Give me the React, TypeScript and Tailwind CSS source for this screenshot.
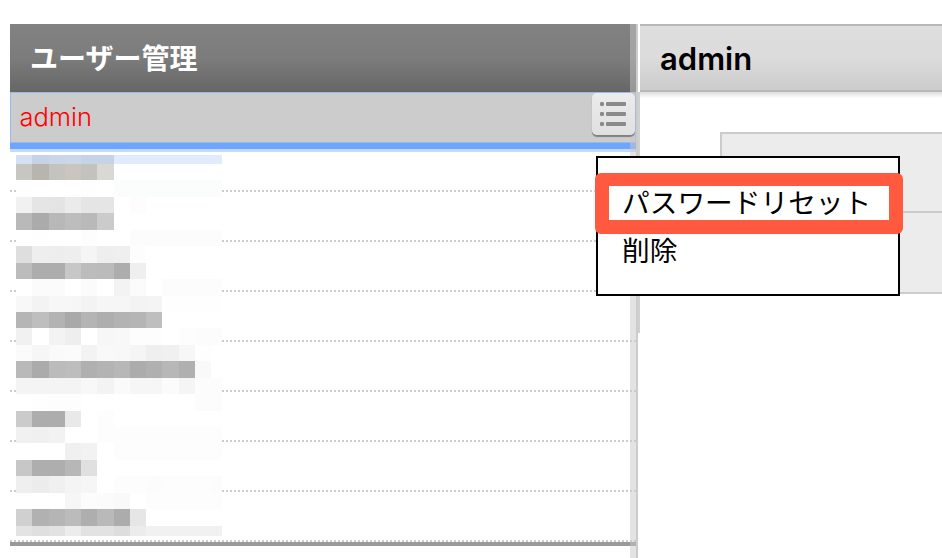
import React from "react";

// blurred user names, one line per strip of blocks
const mosaic = [
  "d5e0f2 c6d2e6 cad5e8 cbd6e9 c6d2e6 c7d2e6 e0ebfb e0ebfb e0ebfb e0ebfb e0ebfb e0ebfb e0ebfb",
  "c8c6c0 b8b4ae c5c3bd c9c5bf c3c2bd d9d8d3 fff fff fff fff fff fff fff",
  "fefefe fff fff fff fefefe fff fbfcfc fbfcfc fbfcfc fbfcfc fbfcfc fbfcfc fbfcfc",
  "f1f1f1 e5e5e5 e4e4e4 ebebeb e5e5e5 e5e5e5 fff fdfdfd fff fff fff fff fff",
  "b9b9b9 ababab b8b8b8 bdbdbd b9b9b9 cbcbcb fff fff fff fff fff fff fff",
  "fff fefefe fff fff fdfdfd fff fff fcfcfc fcfcfc fcfcfc fcfcfc fcfcfc fcfcfc",
  "dedede eeeeee ededed eeeeee f5f5f5 eeeeee efefef fdfdfd fff fff fff fff fff",
  "bcbcbc adadad adadad c7c7c7 bcbcbc bbbbbb adadad efefef fff fff fff fff fff",
  "fff fbfbfb fbfbfb fff fbfbfb fff f3f3f3 fbfbfb fff fcfcfc fcfcfc fcfcfc fcfcfc",
  "f8f8f8 f3f3f3 f7f7f7 f6f6f6 f3f3f3 f6f6f6 f6f6f6 f3f3f3 f4f4f4 fefefe fefefe fefefe fefefe",
  "b5b5b5 bebebe b3b3b3 a9a9a9 b4b4b4 aeaeae b3b3b3 b5b5b5 bebebe fff fff fff fff",
  "f1f1f1 fff f3f3f3 eeeeee fff f7f7f7 f8f8f8 fdfdfd fdfdfd fff fdfdfd fcfcfc fcfcfc",
  "fbfbfb f6f6f6 fafafa fbfbfb f3f3f3 f9f9f9 f8f8f8 f5f5f5 efefef f0f0f0 f7f7f7 fefefe fff",
  "b9b9b9 ababab bbbbbb bdbdbd b0b0b0 b3b3b3 b7b7b7 acacac b0b0b0 b7b7b7 b0b0b0 f9f9f9 fff",
  "f4f4f4 f4f4f4 f4f4f4 f4f4f4 f8f8f8 f3f3f3 fafafa f6f6f6 f6f6f6 fbfbfb f5f5f5 fcfcfc fcfcfc",
  "fff fefefe fdfdfd fdfdfd fff fff fff fff fff fff fff fcfcfc fcfcfc",
  "cbcbcb adadad adadad e9e9e9 fff fdfdfd fff fff fff fff fff fff fff",
  "f1f1f1 f0f0f0 f2f2f2 fff fff fdfdfd fdfdfd fdfdfd fdfdfd fdfdfd fdfdfd fdfdfd fdfdfd",
  "fff fff fff f0f0f0 f2f2f2 fff fdfdfd fdfdfd fdfdfd fdfdfd fdfdfd fdfdfd fdfdfd",
  "c7c7c7 aeaeae aeaeae b7b7b7 e0e0e0 fff fff fff fff fff fff fff fff",
  "efefef ececec f0f0f0 f4f4f4 f6f6f6 fff fdfdfd fdfdfd fcfcfc fdfdfd fdfdfd fdfdfd fcfcfc",
  "fff fff fff f6f6f6 fcfcfc fbfbfb f9f9f9 fff fdfdfd fdfdfd fdfdfd fdfdfd fdfdfd",
  "d0d0d0 b1b1b1 b5b5b5 bbbbbb aeaeae b9b9b9 acacac e6e6e6 fff fff fff fff fff",
  "e3e3e3 dfdfdf e2e2e2 ececec e2e2e2 e2e2e2 dddddd ececec f1f1f1 f1f1f1 f1f1f1 f1f1f1 f1f1f1",
];

function Mosaic() {
  return (
    <div className="absolute left-[6px] top-[3px] flex flex-col">
      {mosaic.map((line, i) => (
        <div
          key={i}
          className={`grid grid-cols-[repeat(12,16.25px)_11px] ${
            i === 0 ? "h-[9px]" : i === mosaic.length - 1 ? "h-[10px]" : "h-[16.45px]"
          }`}
        >
          {line.split(" ").map((c, j) => (
            <div key={j} style={{ backgroundColor: `#${c}` }} />
          ))}
        </div>
      ))}
    </div>
  );
}

function ListIcon() {
  return (
    <svg width="43" height="42" viewBox="0 0 43 42" fill="#8a8a8a">
      <rect x="8" y="9" width="4" height="4" rx="1.2" />
      <rect x="14" y="9" width="20" height="4" rx="1" />
      <rect x="8" y="19" width="4" height="4" rx="1.2" />
      <rect x="14" y="19" width="20" height="4" rx="1" />
      <rect x="8" y="29" width="4" height="4" rx="1.2" />
      <rect x="14" y="29" width="20" height="4" rx="1" />
    </svg>
  );
}

export default function App() {
  const rowHeights = ["h-[40px]", "h-[50px]", "h-[50px]", "h-[50px]", "h-[50px]", "h-[50px]", "h-[50px]", "h-[50px]"];

  return (
    <div className="relative flex h-[558px] w-[942px] overflow-hidden bg-white pl-[10px] pt-[24px] font-['Noto_Sans_CJK_JP',sans-serif]">
      {/* user list */}
      <div className="relative flex w-[626px] shrink-0 flex-col">
        <div className="flex h-[68px] items-center bg-gradient-to-b from-[#828282] via-[#7c7c7c] to-[#666666] pb-[2px] pl-[20px] text-[28px] font-bold leading-none text-white">
          ユーザー管理
        </div>
        <div className="flex h-[51px] items-center border border-[#9ab8e8] bg-[#cccccc] pl-[8.5px] font-['Inter',sans-serif] text-[25.5px] font-light text-[#ff0000]">
          admin
        </div>
        <div className="h-[6px] bg-[#6ea6ff]" />
        <div className="h-[3px] bg-[#c4daf8]" />
        <div className="relative flex flex-col">
          {rowHeights.map((h, i) => (
            <div key={i} className={`${h} border-b-2 border-dotted border-[#cccccc]`} />
          ))}
          <Mosaic />
        </div>
        <div className="h-[4px] bg-[#999999]" />

        <div className="absolute bottom-0 right-0 top-0 w-[6px] bg-[#c8c8c8]/50" />
        <div className="absolute left-[582px] top-[69px] flex h-[42px] w-[43px] items-center justify-center rounded-[5px] bg-gradient-to-b from-[#ececec] to-[#e0e0e0] shadow-[0_2px_1px_#808080]">
          <ListIcon />
        </div>
      </div>

      <div className="w-[2px] shrink-0 bg-[#cccccc]" />
      <div className="flex w-[2px] shrink-0 flex-col">
        <div className="h-[68px]" />
        <div className="h-[241px] bg-[#d0d0d0]" />
      </div>

      {/* detail pane */}
      <div className="flex min-w-0 flex-1 flex-col">
        <div className="flex h-[68px] items-center border-y-2 border-[#b8b8b8] bg-gradient-to-b from-[#dddddd] via-[#dcdcdc] to-[#cccccc] pl-[20px] pt-[2px] font-['Inter',sans-serif] text-[31px] font-semibold text-black">
          admin
        </div>
        <div className="h-[6px] bg-gradient-to-b from-[#dddddd] to-white" />
        <div className="ml-[80px] mt-[34px] flex h-[162px] flex-col border-y-2 border-l-2 border-[#cccccc] bg-[#ececec]">
          <div className="h-[79px] border-b-2 border-[#cccccc]" />
        </div>
      </div>

      {/* context menu */}
      <div className="absolute left-[596px] top-[156px] h-[140px] w-[304px] border-2 border-black bg-white pl-[24px] pt-[19px] text-[27.7px] leading-[48px] text-black">
        <div>パスワードリセット</div>
        <div>削除</div>
      </div>
      <div className="absolute left-[595px] top-[172.5px] h-[61px] w-[308px] rounded-[6px] border-x-[14px] border-b-[14px] border-t-[13.5px] border-[#ff5a3f]" />
    </div>
  );
}
